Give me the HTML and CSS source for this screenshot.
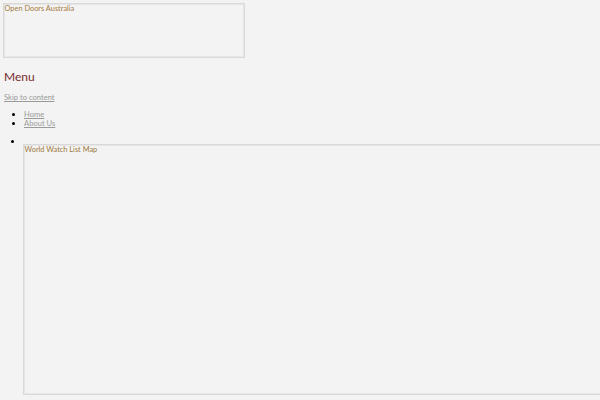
FILE: index.html
```html
<!DOCTYPE html>
<html>
<head>
<meta charset="utf-8">
<link rel="stylesheet" href="styles.css">
</head>
<body>
<div class="logo">Open Doors Australia</div>
<h2 class="menu">Menu</h2>
<a class="skip" href="#">Skip to content</a>
<ul class="nav">
  <li><a href="#">Home</a></li>
  <li><a href="#">About Us</a></li>
</ul>
<ul class="maplist">
  <li><div class="blank">&nbsp;</div><div class="mapbox">World Watch List Map</div></li>
</ul>
</body>
</html>
```
FILE: styles.css
```css
html { background: #f3f3f3; }
body {
  margin: 0;
  padding: 3px;
  background: #f3f3f3;
  font-family: Lato, "Open Sans", sans-serif;
  overflow: hidden;
  height: 394px;
}
.logo {
  width: 239px;
  height: 53px;
  border: 1px solid #d9d9d9;
  box-shadow: inset 0 0 0 1px #e6e6e6;
  color: #a57a3e;
  font-size: 7.4px;
  line-height: 9px;
  padding-left: 0.5px;
}
.menu {
  margin: 11px 0 0 1px;
  font-size: 12px;
  line-height: 15px;
  font-weight: normal;
  color: #7a2b2f;
}
.skip {
  display: block;
  margin: 8px 0 0 1px;
  font-size: 7.6px;
  line-height: 10px;
  color: #9a9a9a;
  width: max-content;
}
.nav {
  margin: 8px 0 0;
  padding-left: 21px;
  font-size: 7.6px;
  line-height: 9px;
}
.nav a { color: #9a9a9a; }
.maplist {
  margin: 9px 0 0;
  padding-left: 20px;
  font-size: 8px;
  line-height: 9px;
}
.blank { height: 5px; line-height: 4px; }
.mapbox {
  width: 600px;
  height: 249px;
  border: 1px solid #d9d9d9;
  box-shadow: inset 0 0 0 1px #e6e6e6;
  color: #9c783c;
  font-size: 7.4px;
  line-height: 9px;
  padding-left: 0.5px;
}
```
